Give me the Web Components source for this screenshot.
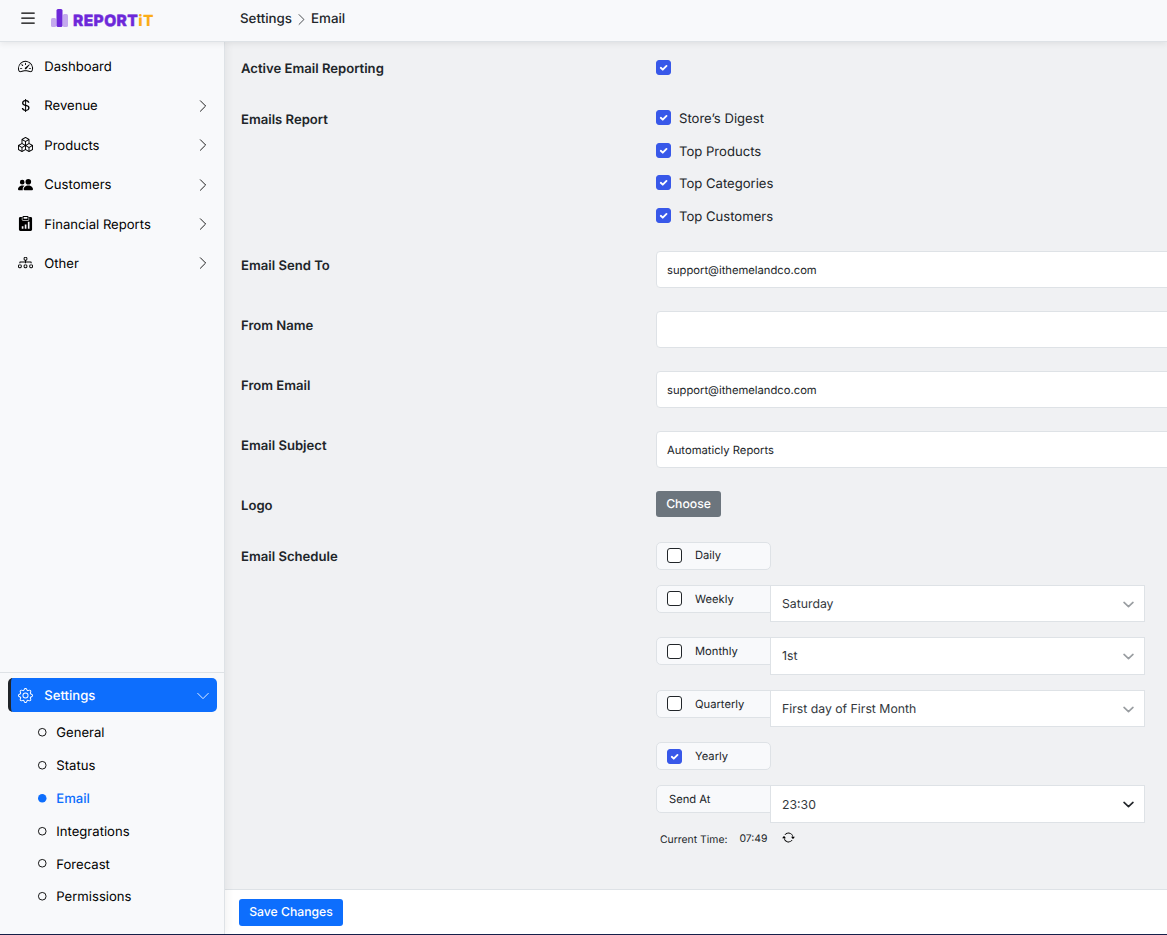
<!DOCTYPE html>
<html lang="en">
<head>
<meta charset="utf-8">
<title>Report it - Email settings</title>
<style>
html,body{margin:0;height:100%;overflow:hidden;background:#f0f1f3;font-family:Inter,"Liberation Sans",sans-serif;font-size:13.100px;color:#212529;text-rendering:geometricPrecision}
</style>
</head>
<body>
<report-app></report-app>
<script>
const ICONS = {
  list:'<path fill-rule="evenodd" d="M2.5 12a.5.5 0 0 1 .5-.5h10a.5.5 0 0 1 0 1H3a.5.5 0 0 1-.5-.5m0-4a.5.5 0 0 1 .5-.5h10a.5.5 0 0 1 0 1H3a.5.5 0 0 1-.5-.5m0-4a.5.5 0 0 1 .5-.5h10a.5.5 0 0 1 0 1H3a.5.5 0 0 1-.5-.5"/>',
  speed:'<path d="M8 4a.5.5 0 0 1 .5.5V6a.5.5 0 0 1-1 0V4.500A.5.5 0 0 1 8 4M3.732 5.732a.5.5 0 0 1 .707 0l.915.914a.5.5 0 1 1-.708.708l-.914-.915a.5.5 0 0 1 0-.707M2 10a.5.5 0 0 1 .5-.5h1.586a.5.5 0 0 1 0 1H2.500A.5.5 0 0 1 2 10m9.500 0a.5.5 0 0 1 .5-.5h1.500a.5.5 0 0 1 0 1H12a.5.5 0 0 1-.5-.5m.754-4.246a.39.39 0 0 0-.527-.02L7.547 9.310a.91.91 0 1 0 1.302 1.258l3.434-4.297a.39.39 0 0 0-.029-.518z"/><path fill-rule="evenodd" d="M0 10a8 8 0 1 1 15.547 2.661c-.442 1.253-1.845 1.602-2.932 1.250C11.309 13.488 9.475 13 8 13c-1.474 0-3.310.488-4.615.911-1.087.352-2.490.003-2.932-1.250A8 8 0 0 1 0 10m8-7a7 7 0 0 0-6.603 9.329c.203.575.923.876 1.680.630C4.397 12.533 6.358 12 8 12s3.604.532 4.923.960c.757.245 1.477-.056 1.680-.631A7 7 0 0 0 8 3"/>',
  dollar:'<path d="M4 10.781c.148 1.667 1.513 2.850 3.591 3.003V15h1.043v-1.216c2.270-.179 3.678-1.438 3.678-3.300 0-1.590-.947-2.510-2.956-3.028l-.722-.187V3.467c1.122.110 1.879.714 2.070 1.616h1.470c-.166-1.600-1.540-2.748-3.540-2.875V1H7.591v1.233c-1.939.230-3.270 1.472-3.270 3.156 0 1.454.966 2.483 2.661 2.917l.610.162v4.031c-1.149-.170-1.940-.800-2.131-1.718zm3.391-3.836c-1.043-.263-1.600-.825-1.600-1.616 0-.944.704-1.641 1.800-1.828v3.495l-.2-.050zm1.591 1.872c1.287.323 1.852.859 1.852 1.769 0 1.097-.826 1.828-2.200 1.939V8.730z"/>',
  boxes:'<path d="M7.752.066a.5.5 0 0 1 .496 0l3.750 2.143a.5.5 0 0 1 .252.434v3.995l3.498 2A.5.5 0 0 1 16 9.070v4.286a.5.5 0 0 1-.252.434l-3.750 2.143a.5.5 0 0 1-.496 0l-3.502-2-3.502 2.001a.5.5 0 0 1-.496 0l-3.750-2.143A.5.5 0 0 1 0 13.357V9.071a.5.5 0 0 1 .252-.434L3.750 6.638V2.643a.5.5 0 0 1 .252-.434zM4.250 7.504 1.508 9.071l2.742 1.567 2.742-1.567zM7.500 9.933l-2.750 1.571v3.134l2.750-1.571zm1 3.134 2.750 1.571v-3.134L8.500 9.933zm.508-3.996 2.742 1.567 2.742-1.567-2.742-1.567zm2.242-2.433V3.504L8.500 5.076V8.210zM7.500 8.210V5.076L4.750 3.504v3.134zM5.258 2.643 8 4.210l2.742-1.567L8 1.076zM15 9.933l-2.750 1.571v3.134L15 13.067zM3.750 14.638v-3.134L1 9.933v3.134z"/>',
  people:'<path d="M7 14s-1 0-1-1 1-4 5-4 5 3 5 4-1 1-1 1zm4-6a3 3 0 1 0 0-6 3 3 0 0 0 0 6m-5.784 6A2.240 2.240 0 0 1 5 13c0-1.355.680-2.750 1.936-3.720A6.300 6.300 0 0 0 5 9c-4 0-5 3-5 4s1 1 1 1zM4.500 8a2.500 2.500 0 1 0 0-5 2.500 2.500 0 0 0 0 5"/>',
  clipboard:'<path fill-rule="evenodd" d="M5 0h6v1h2.500a1.500 1.500 0 0 1 1.500 1.500v12a1.500 1.500 0 0 1-1.500 1.500h-11A1.500 1.500 0 0 1 1 14.500v-12A1.500 1.500 0 0 1 2.500 1H5zm1 1v2h4V1zM10.500 6v7.500h1.800V6zM7.200 9v4.500H9V9zM4 11v2.500h1.800V11z"/><path fill="none" stroke="#fff" stroke-width=".7" d="M4.500 1.500V4q0 .8.8.8h5.400q.8 0 .8-.8V1.500"/>',
  tree:'<path fill-rule="evenodd" d="M6 3.500A1.500 1.500 0 0 1 7.500 2h1A1.500 1.500 0 0 1 10 3.500v1A1.500 1.500 0 0 1 8.500 6v1H14a.5.5 0 0 1 .5.5v1a.5.5 0 0 1-1 0V8h-5v.5a.5.5 0 0 1-1 0V8h-5v.5a.5.5 0 0 1-1 0v-1A.5.5 0 0 1 2 7h5.500V6A1.500 1.500 0 0 1 6 4.500zM8.500 5a.5.5 0 0 0 .5-.5v-1a.5.5 0 0 0-.5-.5h-1a.5.5 0 0 0-.5.5v1a.5.5 0 0 0 .5.5zM0 11.500A1.500 1.500 0 0 1 1.500 10h1A1.500 1.500 0 0 1 4 11.500v1A1.500 1.500 0 0 1 2.500 14h-1A1.500 1.500 0 0 1 0 12.500zm1.500-.5a.5.5 0 0 0-.5.5v1a.5.5 0 0 0 .5.5h1a.5.5 0 0 0 .5-.5v-1a.5.5 0 0 0-.5-.5zm4.500.5A1.500 1.500 0 0 1 7.500 10h1a1.500 1.500 0 0 1 1.500 1.500v1A1.500 1.500 0 0 1 8.500 14h-1A1.500 1.500 0 0 1 6 12.500zm1.500-.5a.5.5 0 0 0-.5.5v1a.5.5 0 0 0 .5.5h1a.5.5 0 0 0 .5-.5v-1a.5.5 0 0 0-.5-.5zm4.500.5a1.500 1.500 0 0 1 1.500-1.500h1a1.500 1.500 0 0 1 1.500 1.500v1a1.500 1.500 0 0 1-1.500 1.500h-1a1.500 1.500 0 0 1-1.500-1.500zm1.500-.5a.5.5 0 0 0-.5.5v1a.5.5 0 0 0 .5.5h1a.5.5 0 0 0 .5-.5v-1a.5.5 0 0 0-.5-.5z"/>',
  gear:'<path d="M8 4.754a3.246 3.246 0 1 0 0 6.492 3.246 3.246 0 0 0 0-6.492M5.754 8a2.246 2.246 0 1 1 4.492 0 2.246 2.246 0 0 1-4.492 0"/><path d="M9.796 1.343c-.527-1.790-3.065-1.790-3.592 0l-.094.319a.873.873 0 0 1-1.255.520l-.292-.160c-1.640-.892-3.433.902-2.540 2.541l.159.292a.873.873 0 0 1-.520 1.255l-.319.094c-1.790.527-1.790 3.065 0 3.592l.319.094a.873.873 0 0 1 .520 1.255l-.160.292c-.892 1.640.901 3.434 2.541 2.540l.292-.159a.873.873 0 0 1 1.255.520l.094.319c.527 1.790 3.065 1.790 3.592 0l.094-.319a.873.873 0 0 1 1.255-.520l.292.160c1.640.893 3.434-.902 2.540-2.541l-.159-.292a.873.873 0 0 1 .520-1.255l.319-.094c1.790-.527 1.790-3.065 0-3.592l-.319-.094a.873.873 0 0 1-.520-1.255l.160-.292c.893-1.640-.902-3.433-2.541-2.540l-.292.159a.873.873 0 0 1-1.255-.520zm-2.633.283c.246-.835 1.428-.835 1.674 0l.094.319a1.873 1.873 0 0 0 2.693 1.115l.291-.160c.764-.415 1.600.420 1.184 1.185l-.159.292a1.873 1.873 0 0 0 1.116 2.692l.318.094c.835.246.835 1.428 0 1.674l-.319.094a1.873 1.873 0 0 0-1.115 2.693l.160.291c.415.764-.420 1.600-1.185 1.184l-.291-.159a1.873 1.873 0 0 0-2.693 1.116l-.094.318c-.246.835-1.428.835-1.674 0l-.094-.319a1.873 1.873 0 0 0-2.692-1.115l-.292.160c-.764.415-1.600-.420-1.184-1.185l.159-.291A1.873 1.873 0 0 0 1.945 8.930l-.319-.094c-.835-.246-.835-1.428 0-1.674l.319-.094A1.873 1.873 0 0 0 3.060 4.377l-.160-.292c-.415-.764.420-1.600 1.185-1.184l.292.159a1.873 1.873 0 0 0 2.692-1.115z"/>',
  right:'<path fill="none" stroke="currentColor" stroke-linecap="round" stroke-linejoin="round" d="m5 2 6 6-6 6"/>',
  down:'<path fill="none" stroke="currentColor" stroke-linecap="round" stroke-linejoin="round" d="m2 5 6 6 6-6"/>',
  select:'<path fill="none" stroke="currentColor" stroke-width="2.400" stroke-linecap="round" stroke-linejoin="round" d="m1.500 5 6.500 6 6.500-6"/>',
  check:'<path fill="none" stroke="#fff" stroke-width="2" stroke-linecap="round" stroke-linejoin="round" d="m5.100 8.300 2.100 2 4-4"/>',
  circle:'<circle cx="8" cy="8" r="7.200" fill="none" stroke="currentColor" stroke-width="1.700"/>',
  dot:'<circle cx="8" cy="8" r="8"/>',
  repeat:'<path d="M11.534 7h3.932a.25.25 0 0 1 .192.410l-1.966 2.360a.25.25 0 0 1-.384 0l-1.966-2.360a.25.25 0 0 1 .192-.410m-11 2h3.932a.25.25 0 0 0 .192-.410L2.692 6.230a.25.25 0 0 0-.384 0L.342 8.590A.25.25 0 0 0 .534 9"/><path fill-rule="evenodd" d="M8 3c-1.552 0-2.940.707-3.857 1.818a.5.5 0 1 1-.771-.636A6.002 6.002 0 0 1 13.917 7H12.900A5 5 0 0 0 8 3M3.100 9a5.002 5.002 0 0 0 8.757 2.182.5.5 0 1 1 .771.636A6.002 6.002 0 0 1 2.083 9z"/>'
};

function define(name, markup) {
  const tpl = document.createElement('template');
  customElements.define(name, class extends HTMLElement {
    connectedCallback() {
      if (this.shadowRoot) return;
      const root = this.attachShadow({mode: 'open'});
      tpl.innerHTML = typeof markup === 'function' ? markup(this) : markup;
      root.append(tpl.content.cloneNode(true));
    }
  });
}

define('ui-icon', el => `<style>:host{display:block;flex:none;width:var(--s,15px);height:var(--s,15px)}svg{display:block;width:100%;height:100%;overflow:visible}</style>
<svg viewBox="0 0 16 16" fill="currentColor" aria-hidden="true">${ICONS[el.getAttribute('name')]}</svg>`);

define('app-logo', `<style>
:host{display:flex;align-items:flex-start;height:20px}
svg{display:block;width:17px;height:19px;margin-right:5px}
.w{font-weight:800;font-size:15.500px;line-height:20px;letter-spacing:.45px;color:#6d28d9;-webkit-text-stroke:.5px currentColor;margin-top:2px;white-space:nowrap}
.w span{color:#fbad18;-webkit-text-stroke:0}
</style>
<svg viewBox="0 0 17 19"><rect y="9" width="5.200" height="9" rx="1.500" fill="#c4a9ee"/><rect x="11.800" y="5" width="5.200" height="13" rx="1.500" fill="#c4a9ee"/><rect x="5.500" width="6" height="18" rx="1.500" fill="#6d28d9"/></svg>
<div class="w">REPORT<span>iT</span></div>`);

define('app-header', `<style>
:host{display:flex;box-sizing:border-box;height:42px;background:#f8f9fb;border-bottom:1px solid #dee2e6;box-shadow:0 2px 6px rgba(0,0,0,.07);position:relative;z-index:3;color:#212529}
.brand{display:flex;width:240px;box-sizing:border-box;padding:9px 0 0 18px}
.brand ui-icon{--s:20px;margin-top:-1px;color:#000}
app-logo{margin-left:13px}
.crumb{display:flex;align-items:center;height:20px;margin-top:9px;font-weight:500;font-size:13.350px}
.crumb ui-icon{--s:13px;margin:0 3px 0 3px}
</style>
<div class="brand"><ui-icon name="list"></ui-icon><app-logo></app-logo></div>
<div class="crumb"><span>Settings</span><ui-icon name="right"></ui-icon><span>Email</span></div>`);

define('nav-item', el => `<style>
:host{display:flex;align-items:center;height:34px;margin:0 8px 5.400px;padding:0 6px 0 10px;color:#000}
:host([active]){background:#0d6efd;color:#fff;border-left:3px solid #212529;border-radius:5px;padding-left:7px;margin:0 8px 4px}
:host([active]) span{font-weight:500}
span{margin-left:11.300px;flex:1;padding-top:2px}
.a{--s:14px;margin-top:1px}
:host([active]) .a{margin-right:1.500px}
</style><ui-icon name="${el.getAttribute('icon')}"></ui-icon><span><slot></slot></span>
${el.hasAttribute('arrow') ? `<ui-icon class="a" name="${el.getAttribute('arrow')}"></ui-icon>` : ''}`);

define('sub-item', el => `<style>
:host{display:flex;align-items:center;height:32.800px;padding-left:38px;color:#000}
:host([current]){color:#0d6efd;font-weight:500}
ui-icon{--s:8.500px;margin-right:9.800px}
span{padding-top:2px}
</style><ui-icon name="${el.hasAttribute('current') ? 'dot' : 'circle'}"></ui-icon><span><slot></slot></span>`);

define('app-sidebar', `<style>
:host{display:flex;flex-direction:column;box-sizing:border-box;width:225px;flex:none;background:#f8f9fb;border-right:1px solid #dee2e6;box-shadow:2px 0 8px rgba(0,0,0,.06);position:relative;z-index:1}
.main{flex:1;padding-top:7px}
.foot{box-sizing:border-box;height:262px;border-top:1px solid #dee2e6;padding-top:5px}
.foot nav-item{width:193px}
</style>
<div class="main">
<nav-item icon="speed">Dashboard</nav-item>
<nav-item icon="dollar" arrow="right">Revenue</nav-item>
<nav-item icon="boxes" arrow="right">Products</nav-item>
<nav-item icon="people" arrow="right">Customers</nav-item>
<nav-item icon="clipboard" arrow="right">Financial Reports</nav-item>
<nav-item icon="tree" arrow="right">Other</nav-item>
</div>
<div class="foot">
<nav-item icon="gear" arrow="down" active>Settings</nav-item>
<sub-item>General</sub-item><sub-item>Status</sub-item><sub-item current>Email</sub-item><sub-item>Integrations</sub-item><sub-item>Forecast</sub-item><sub-item>Permissions</sub-item>
</div>`);

define('check-box', `<style>
:host{display:block;flex:none;box-sizing:border-box;width:15px;height:15px;border:1px solid #212529;border-radius:3px;background:#fff}
:host([checked]){background:#3858e9;border-color:#3858e9}
ui-icon{--s:15px;margin:-1px;display:none}
:host([checked]) ui-icon{display:block}
</style><ui-icon name="check"></ui-icon>`);

define('check-option', `<style>
:host{display:flex;align-items:center;height:32.600px}
check-box{margin:0 8px 1px 0}
span{padding-top:2px}
</style><check-box checked></check-box><span><slot></slot></span>`);

define('form-row', el => `<style>
:host{display:grid;grid-template-columns:415px 1fr;height:var(--row-h,60px)}
.l{font-weight:600;line-height:20px;padding-top:5px}
</style><div class="l">${el.getAttribute('label')}</div><div><slot></slot></div>`);

define('text-field', `<style>
:host{display:flex;align-items:center;box-sizing:border-box;width:560px;height:37px;border:1px solid #dee2e6;border-radius:4px;background:#fff;padding:0 10px;font-size:11.220px}
</style><slot></slot>`);

define('ui-button', `<style>
:host{display:inline-flex;align-items:center;justify-content:center;box-sizing:border-box;height:26px;border-radius:3px;font-size:12.200px;font-weight:500;color:#fff;background:var(--bg);padding-bottom:var(--pb,1px)}
</style><slot></slot>`);

define('select-field', `<style>
:host{display:flex;align-items:center;box-sizing:border-box;width:375px;height:37px;margin-left:-1px;border:1px solid #dee2e6;background:#fff;padding:0 10px 0 11px;font-size:12.250px;color:#32373c}
span{flex:1;padding-bottom:var(--lift,0)}ui-icon{--s:11px;margin-top:1px;color:#999da1}
:host([dark]) ui-icon{color:#212529}
</style><span><slot></slot></span><ui-icon name="select"></ui-icon>`);

define('schedule-item', el => `<style>
:host{display:flex;align-items:flex-start;height:var(--item-h,52px)}
.p{display:flex;align-items:center;box-sizing:border-box;width:115px;height:28px;border:1px solid #dee2e6;border-radius:5px;background:#f8f9fb;padding:0 10px 1px;font-size:11.200px;flex:none}
.p.j{border-radius:5px 0 0 5px}
.p.n{padding-left:12px}
check-box{margin-right:13px}
:host([low]) check-box{margin-top:2px}
:host([label="Daily"]) span{padding-bottom:2px}
</style><div class="p ${el.hasAttribute('joined') ? 'j' : ''} ${el.hasAttribute('nocheck') ? 'n' : ''}">${el.hasAttribute('nocheck') ? '' : `<check-box ${el.hasAttribute('checked') ? 'checked' : ''}></check-box>`}<span>${el.getAttribute('label')}</span></div><slot></slot>`);

define('email-form', `<style>
:host{display:block;flex:1;padding:12px 0 0 16px;overflow:hidden}
.tall{height:38px}
.time{display:flex;align-items:center;font-size:10.400px;height:20px;padding-left:4px}
.time b{font-weight:400;margin:-2px 15px 0 12px}
.time ui-icon{--s:13px;margin-top:-3px;color:#000}
</style>
<form-row label="Active Email Reporting" style="--row-h:51px"><check-box checked style="margin-top:6px"></check-box></form-row>
<form-row label="Emails Report" style="--row-h:146px"><div style="margin-top:-3px"><check-option>Store’s Digest</check-option><check-option>Top Products</check-option><check-option>Top Categories</check-option><check-option>Top Customers</check-option></div></form-row>
<form-row label="Email Send To"><text-field>support@ithemelandco.com</text-field></form-row>
<form-row label="From Name"><text-field></text-field></form-row>
<form-row label="From Email"><text-field>support@ithemelandco.com</text-field></form-row>
<form-row label="Email Subject"><text-field>Automaticly Reports</text-field></form-row>
<form-row label="Logo" style="--row-h:51px"><ui-button style="--bg:#6c757d;width:65px">Choose</ui-button></form-row>
<form-row label="Email Schedule" style="--row-h:330px">
<schedule-item label="Daily" style="--item-h:43px"></schedule-item>
<schedule-item label="Weekly" joined><select-field>Saturday</select-field></schedule-item>
<schedule-item label="Monthly" joined low style="--item-h:53px"><select-field class="tall" style="--lift:2px">1st</select-field></schedule-item>
<schedule-item label="Quarterly" joined><select-field>First day of First Month</select-field></schedule-item>
<schedule-item label="Yearly" checked low style="--item-h:43px"></schedule-item>
<schedule-item label="Send At" nocheck joined style="--item-h:44px"><select-field class="tall" dark>23:30</select-field></schedule-item>
<div class="time"><span>Current Time:</span><b>07:49</b><ui-icon name="repeat"></ui-icon></div>
</form-row>`);

define('report-app', `<style>
:host{display:flex;flex-direction:column;height:935px;box-sizing:border-box;border-bottom:1px solid #16204a}
.body{display:flex;flex:1;min-height:0}
.content{display:flex;flex-direction:column;flex:1;min-width:0}
.foot{box-sizing:border-box;height:45px;border-top:1px solid #dee2e6;background:#fff;padding:9px 14px;display:flex}
</style>
<app-header></app-header>
<div class="body"><app-sidebar></app-sidebar>
<div class="content"><email-form></email-form><div class="foot"><ui-button style="--bg:#0d6efd;--pb:2px;width:104px;height:27px">Save Changes</ui-button></div></div></div>`);
</script>
</body>
</html>
